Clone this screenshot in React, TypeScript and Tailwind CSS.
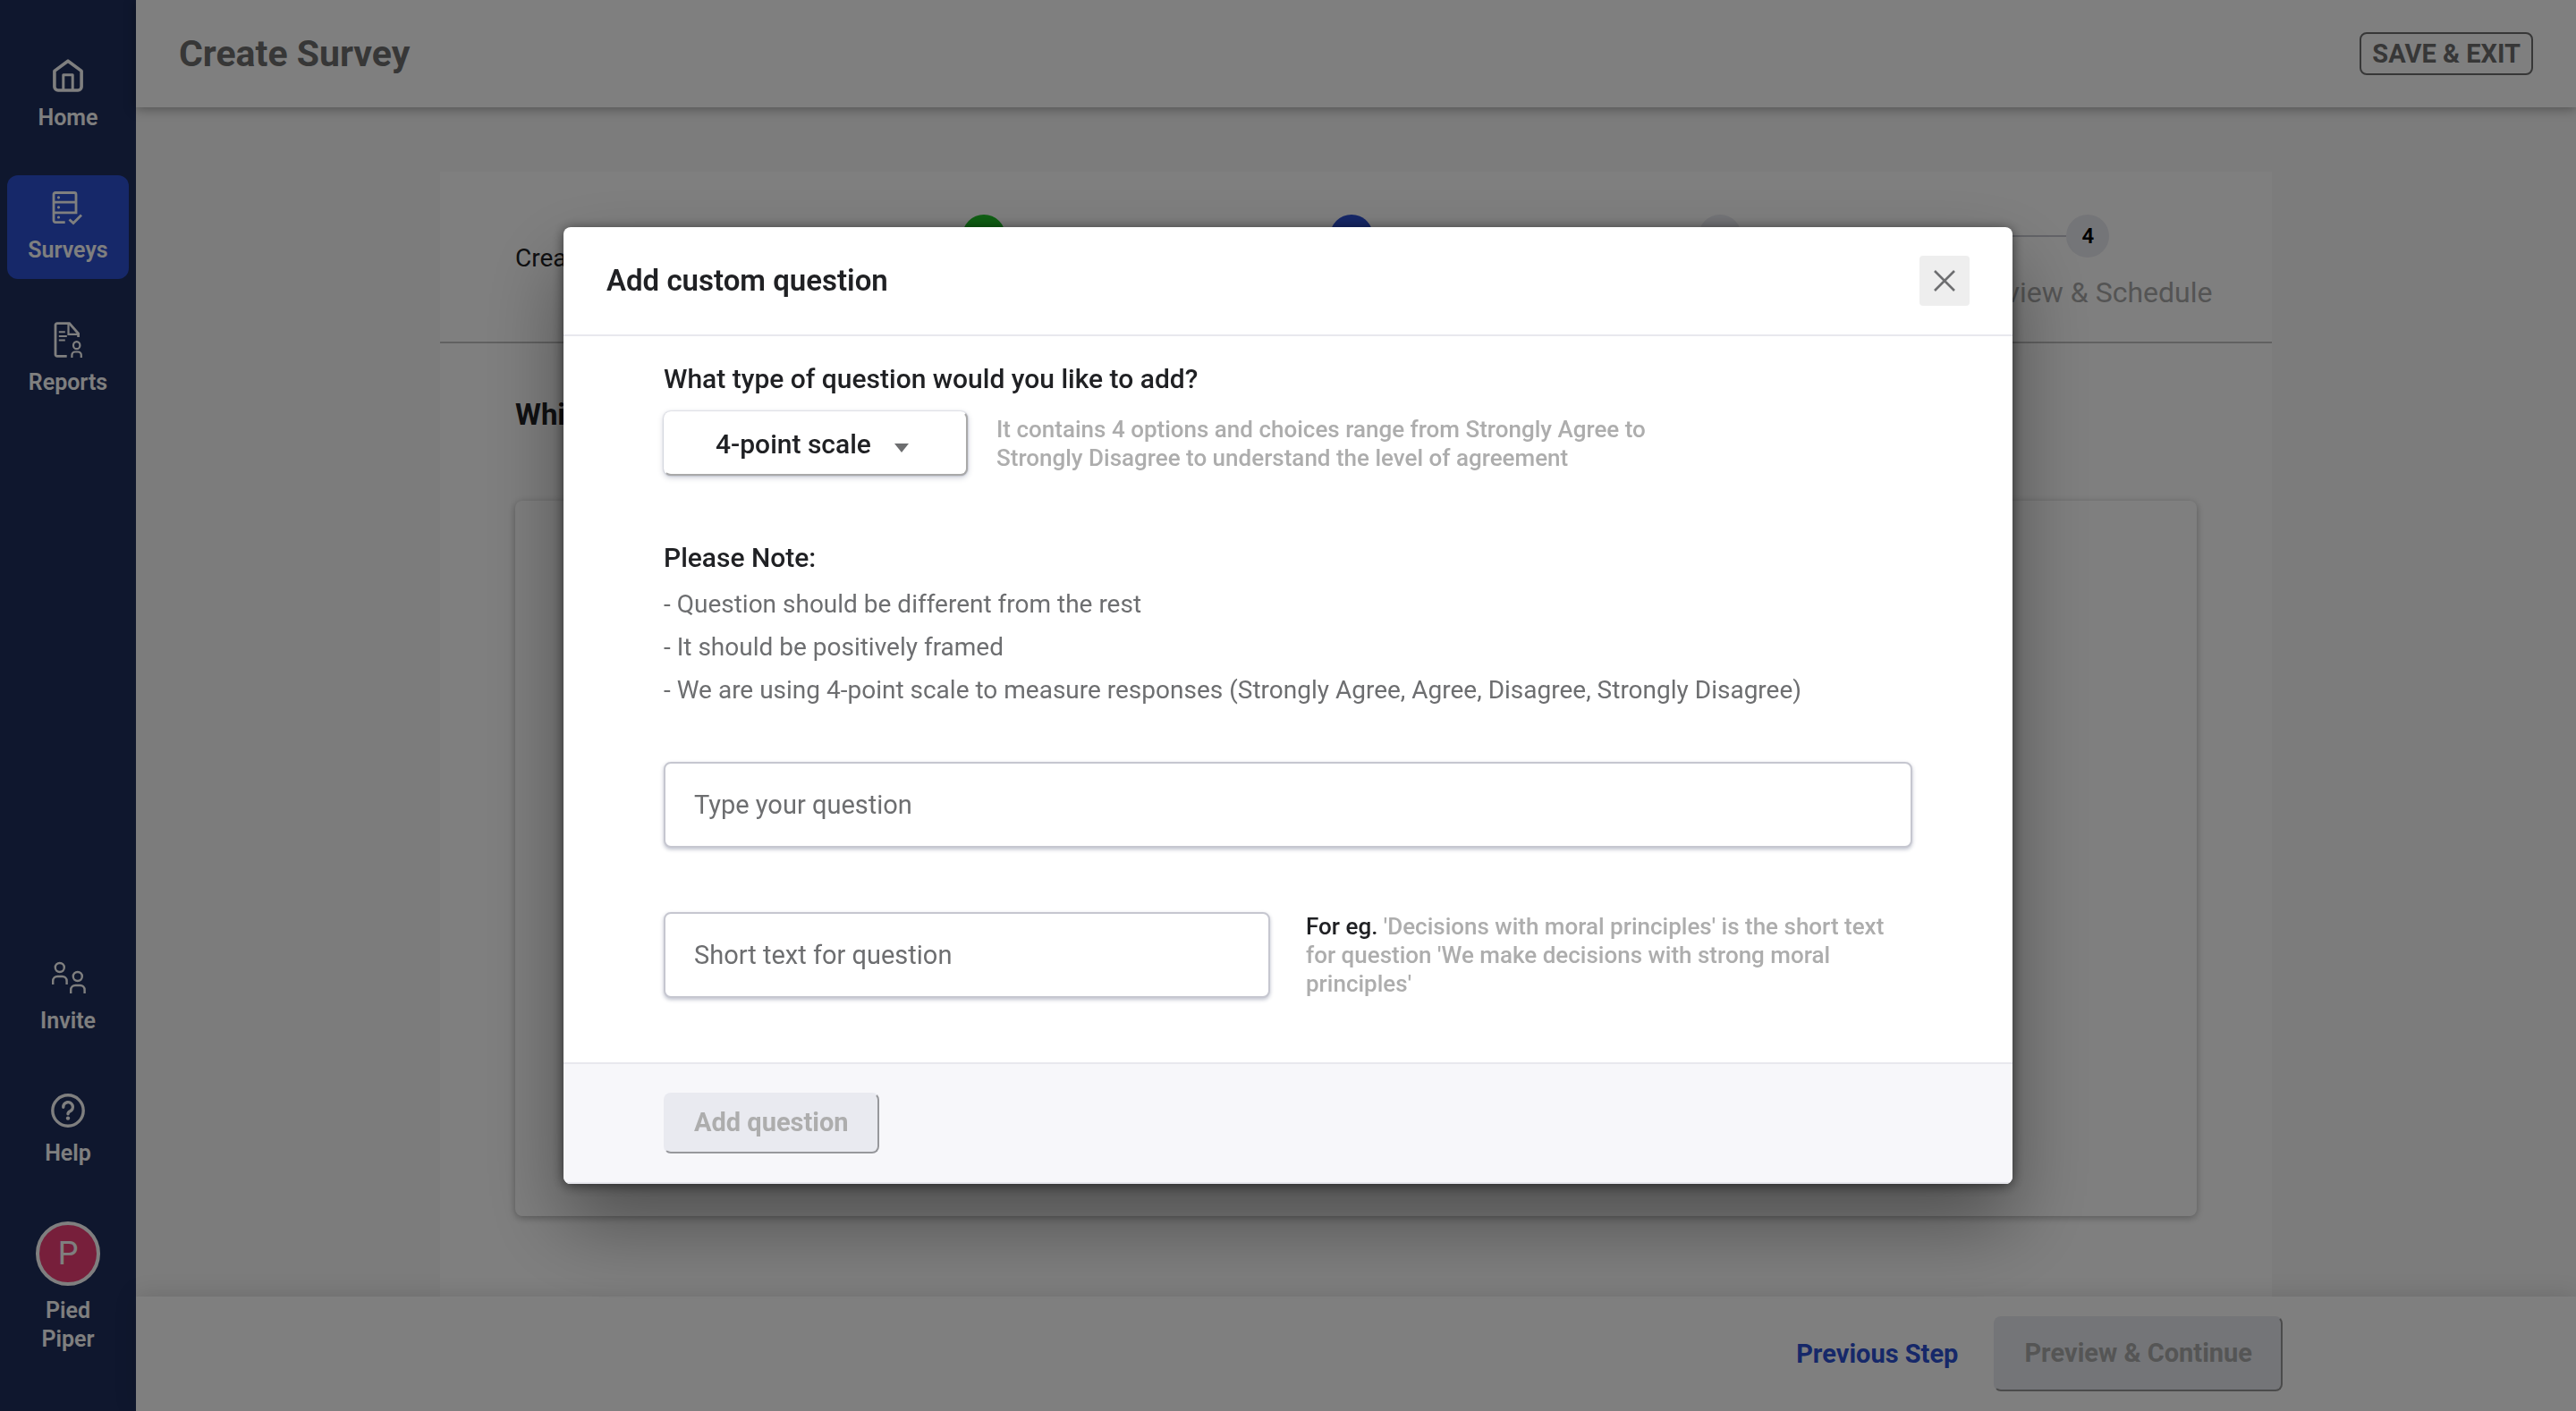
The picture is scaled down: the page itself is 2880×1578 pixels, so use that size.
import React, { ReactNode, useState } from "react";

const iconProps = {
  viewBox: "0 0 40 40",
  fill: "none",
  stroke: "currentColor",
  "aria-hidden": true,
  className: "size-10",
} as const;

const HomeIcon = () => (
  <svg {...iconProps} strokeWidth={3.6}>
    <path d="M20 4.2 4.9 15.4V33a4 4 0 0 0 4 4h22.200a4 4 0 0 0 4-4V15.400Z" strokeLinejoin="round" />
    <path d="M14.800 37V19.800h10.400V37" strokeWidth={3} strokeLinejoin="round" />
  </svg>
);

const SurveysIcon = () => (
  <svg {...iconProps} strokeWidth={2.8}>
    <path d="M16.700 36.600H6a2 2 0 0 1-2-2V5.500a2 2 0 0 1 2-2h21a2 2 0 0 1 2 2v20.300H4M4 14.200h25" />
    <path d="m21.500 33.500 4.500 4 9-9" />
    <g fill="currentColor" stroke="none">
      <circle cx="9.500" cy="8.800" r="1.600" />
      <circle cx="9.500" cy="19.800" r="1.600" />
      <circle cx="9.500" cy="31" r="1.600" />
    </g>
  </svg>
);

const ReportsIcon = () => (
  <svg {...iconProps} strokeWidth={2.8}>
    <path d="M18.700 38.400H8a2 2 0 0 1-2-2V3.600a2 2 0 0 1 2-2h13.600l10 11.400v4" />
    <path d="M20.500 2v11.800h11.500" strokeWidth={2.200} />
    <path d="M9.800 11.300h7M9.800 16h9M9.800 20.500h7" strokeWidth={2} />
    <ellipse cx="29.700" cy="26.200" rx="3.700" ry="4" strokeWidth={2.200} />
    <path d="M24.400 40v-3a3.500 3.500 0 0 1 3.500-3.500h3.400a3.500 3.500 0 0 1 3.500 3.500v3" strokeWidth={2.200} />
  </svg>
);

const InviteIcon = () => (
  <svg {...iconProps} strokeWidth={2.400}>
    <circle cx="10.800" cy="8" r="5" />
    <path d="M3.200 27v-4a5 5 0 0 1 5-5h5.400a5 5 0 0 1 5 5v4" />
    <circle cx="30.800" cy="18" r="5" />
    <path d="M23.200 37v-4a5 5 0 0 1 5-5h5.400a5 5 0 0 1 5 5v4" />
  </svg>
);

const HelpIcon = () => (
  <svg {...iconProps} strokeWidth={3.400}>
    <circle cx="20" cy="20" r="17.200" />
    <path d="M14.800 16.200a5.300 5.300 0 1 1 7.600 4.500c-1.500.7-2.400 1.200-2.400 3" strokeLinecap="round" />
    <circle cx="20" cy="28.600" r="2.200" fill="currentColor" stroke="none" />
  </svg>
);

function NavItem({ icon, label, active = false }: { icon: ReactNode; label: string; active?: boolean }) {
  return (
    <a
      href="#"
      aria-current={active ? "page" : undefined}
      className={`flex flex-col items-center gap-3 rounded-xl py-4 text-[25px] leading-8 font-semibold ${
        active ? "bg-[#2c50d2]" : ""
      }`}
    >
      {icon}
      {label}
    </a>
  );
}

function Sidebar() {
  return (
    <aside className="flex w-[152px] shrink-0 flex-col justify-between bg-[#1e2e5c] px-2 py-12 text-white">
      <nav className="flex flex-col gap-8">
        <NavItem icon={<HomeIcon />} label="Home" />
        <NavItem icon={<SurveysIcon />} label="Surveys" active />
        <NavItem icon={<ReportsIcon />} label="Reports" />
      </nav>
      <nav className="flex flex-col gap-8">
        <NavItem icon={<InviteIcon />} label="Invite" />
        <NavItem icon={<HelpIcon />} label="Help" />
        <a href="#" className="flex flex-col items-center gap-3 px-6 pt-3 pb-4 text-center text-[25px] leading-8 font-semibold">
          <span className="flex size-[72px] items-center justify-center rounded-full border-4 border-white bg-[#ee3f77] text-4xl font-normal">
            P
          </span>
          Pied Piper
        </a>
      </nav>
    </aside>
  );
}

const steps = [
  { label: "Choose Template", dot: "bg-[#1fc028] text-white" },
  { label: "Questions", dot: "bg-[#2c50d2] text-white" },
  { label: "Participants", dot: "bg-[#e9eaf0] text-black" },
  { label: "Preview & Schedule", dot: "bg-[#e9eaf0] text-black" },
];

function Stepper() {
  return (
    <div className="flex border-b-2 border-[#c2c2c2] pt-12 pb-8">
      <p className="flex w-[402px] shrink-0 items-center pb-3 pl-[84px] text-[28px] leading-8 text-[#202124]">
        Create Survey
      </p>
      <ol className="grid flex-1 grid-cols-4">
        {steps.map((step, i) => (
          <li key={step.label} className="flex flex-col items-center gap-4">
            <div className="flex w-full items-center">
              <span className={`h-[2px] flex-1 ${i === 0 ? "" : "bg-[#c6c7d0]"}`} />
              <span className={`flex size-12 items-center justify-center rounded-full text-2xl font-semibold ${step.dot}`}>
                {i + 1}
              </span>
              <span className={`h-[2px] flex-1 ${i === 3 ? "" : "bg-[#c6c7d0]"}`} />
            </div>
            <span className="text-[32px] leading-[46px] text-[#a9a9a9]">{step.label}</span>
          </li>
        ))}
      </ol>
    </div>
  );
}

function Page() {
  return (
    <div className="flex min-h-screen">
      <Sidebar />
      <div className="flex min-w-0 flex-1 flex-col bg-[#f8f8f8]">
        <header className="relative flex h-[120px] items-center justify-between bg-white px-12 text-[#6f6f6f] shadow-[0_2px_12px_rgba(0,0,0,0.35)]">
          <h1 className="text-[41px] leading-[48px] font-bold">Create Survey</h1>
          <button type="button" className="h-12 rounded-lg border-2 border-[#6f6f6f] px-3 text-[29px] leading-10 font-bold">
            SAVE &amp; EXIT
          </button>
        </header>
        <main className="mx-auto mt-[72px] flex w-full max-w-[2048px] flex-1 flex-col bg-white">
          <Stepper />
          <div className="flex flex-1 flex-col px-[84px] pt-[60px] pb-[90px]">
            <h2 className="text-[33px] leading-10 font-bold text-[#202124]">Which questions do you want to ask?</h2>
            <section className="mt-[76px] flex-1 rounded-lg bg-white shadow-[0_2px_8px_rgba(0,0,0,0.3)]" />
          </div>
        </main>
        <footer className="relative bg-white px-4 py-[22px] shadow-[0_-2px_24px_rgba(0,0,0,0.12)]">
          <div className="mx-auto flex max-w-[2072px] items-center justify-end gap-10">
            <button type="button" className="text-[29px] leading-8 font-bold text-[#2c50d2]">
              Previous Step
            </button>
            <button
              type="button"
              disabled
              className="h-[84px] rounded-lg border-2 border-t-[#e9eaf0] border-r-[#969696] border-b-[#969696] border-l-[#e9eaf0] bg-[#e9eaf0] px-8 text-[29px] font-bold text-[#aaaaaa]"
            >
              Preview &amp; Continue
            </button>
          </div>
        </footer>
      </div>
    </div>
  );
}

const notes = [
  "- Question should be different from the rest",
  "- It should be positively framed",
  "- We are using 4-point scale to measure responses (Strongly Agree, Agree, Disagree, Strongly Disagree)",
];

const fieldClass =
  "block h-24 w-full rounded-lg border-2 border-[#c6c7d0] bg-white px-8 text-[29px] text-[#202124] shadow-[0_2px_4px_rgba(40,50,90,0.3)] outline-none placeholder:text-[#6d6e70] placeholder:opacity-100";

function AddQuestionDialog() {
  const [type, setType] = useState("4-point scale");
  const [question, setQuestion] = useState("");
  const [shortText, setShortText] = useState("");
  return (
    <div className="fixed inset-0 flex items-center justify-center bg-black/50">
      <form
        role="dialog"
        aria-modal="true"
        aria-labelledby="dialog-title"
        className="w-full max-w-[1620px] overflow-hidden rounded-lg bg-white text-[#202124] shadow-[0_2px_14px_rgba(0,0,0,0.55),0_44px_88px_0_rgba(0,0,0,0.38)]"
      >
        <header className="flex items-center justify-between border-b-2 border-[#e8e8ee] px-12 py-8">
          <h2 id="dialog-title" className="text-[33px] leading-10 font-semibold">
            Add custom question
          </h2>
          <button type="button" aria-label="Close" className="flex size-14 items-center justify-center rounded bg-[#eeeeee] text-[#6d6e70]">
            <svg viewBox="0 0 24 24" className="size-6" fill="none" stroke="currentColor" strokeWidth={2.600} aria-hidden>
              <path d="m1 1 22 22M23 1 1 23" />
            </svg>
          </button>
        </header>

        <div className="px-28 pt-8 pb-[72px]">
          <label htmlFor="question-type" className="block text-[30px] leading-8 font-medium">
            What type of question would you like to add?
          </label>
          <div className="mt-5 flex items-center gap-8">
            <div className="relative w-[340px] shrink-0">
              <select
                id="question-type"
                value={type}
                onChange={(e) => setType(e.target.value)}
                className="block h-[72px] w-full appearance-none rounded-lg border-2 border-t-transparent border-r-[#a9a9a9] border-b-[#a9a9a9] border-l-transparent bg-white pl-14 text-[30px] font-medium shadow-[0_0_2px_rgba(40,50,90,0.35),0_2px_6px_rgba(40,50,90,0.25)] outline-none"
              >
                <option>4-point scale</option>
              </select>
              <svg viewBox="0 0 16 10" className="pointer-events-none absolute top-1/2 right-[66px] h-[10px] w-4 fill-[#6d6e70]" aria-hidden>
                <path d="M0 0h16L8 10Z" />
              </svg>
            </div>
            <p className="max-w-[760px] text-[26px] leading-8 font-medium text-[#adadad]">
              It contains 4 options and choices range from Strongly Agree to Strongly Disagree to understand the level of
              agreement
            </p>
          </div>

          <h3 className="mt-[76px] text-[30px] leading-8 font-medium">Please Note:</h3>
          <ul className="mt-3 text-[28px] leading-[48px] text-[#6d6e70]">
            {notes.map((note) => (
              <li key={note}>{note}</li>
            ))}
          </ul>

          <input
            type="text"
            aria-label="Type your question"
            placeholder="Type your question"
            value={question}
            onChange={(e) => setQuestion(e.target.value)}
            className={`mt-14 ${fieldClass}`}
          />

          <div className="mt-[72px] grid grid-cols-2 items-center gap-10">
            <input
              type="text"
              aria-label="Short text for question"
              placeholder="Short text for question"
              value={shortText}
              onChange={(e) => setShortText(e.target.value)}
              className={fieldClass}
            />
            <p className="pr-6 text-[26px] leading-8 font-medium text-[#adadad]">
              <span className="text-[#202124]">For eg.</span> 'Decisions with moral principles' is the short text for
              question 'We make decisions with strong moral principles'
            </p>
          </div>
        </div>

        <footer className="border-y-2 border-[#e8e8ee] bg-[#f7f7fa] px-28 py-8">
          <button
            type="submit"
            disabled
            className="block h-[68px] rounded-lg border-2 border-t-[#e9eaf0] border-r-[#97989c] border-b-[#97989c] border-l-[#e9eaf0] bg-[#e9eaf0] px-8 text-[29px] font-bold text-[#adadad]"
          >
            Add question
          </button>
        </footer>
      </form>
    </div>
  );
}

export default function App() {
  return (
    <div className="font-['Roboto',sans-serif]">
      <Page />
      <AddQuestionDialog />
    </div>
  );
}
